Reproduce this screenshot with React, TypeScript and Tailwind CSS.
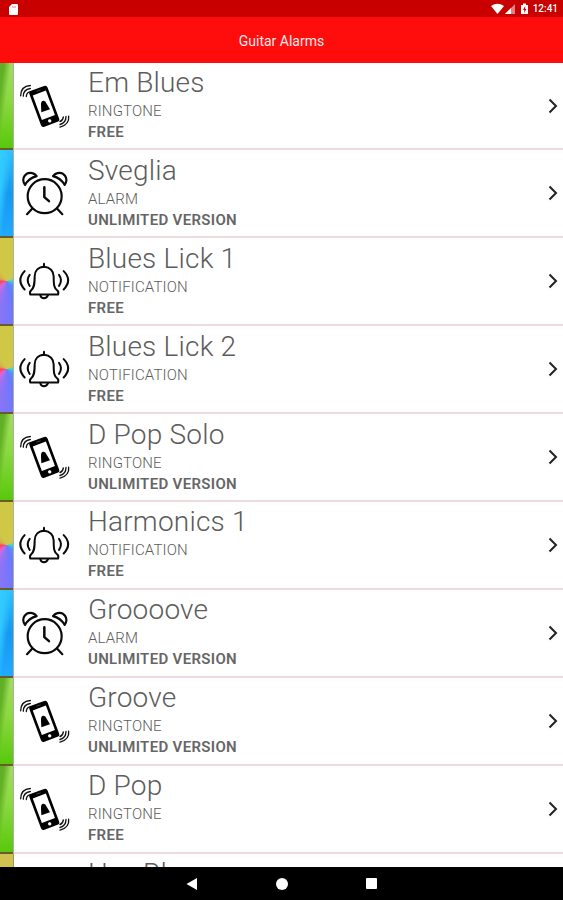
type AlarmKind = "RINGTONE" | "ALARM" | "NOTIFICATION";

interface Tone {
  title: string;
  kind: AlarmKind;
  tier: string;
}

const TONES: Tone[] = [
  { title: "Em Blues", kind: "RINGTONE", tier: "FREE" },
  { title: "Sveglia", kind: "ALARM", tier: "UNLIMITED VERSION" },
  { title: "Blues Lick 1", kind: "NOTIFICATION", tier: "FREE" },
  { title: "Blues Lick 2", kind: "NOTIFICATION", tier: "FREE" },
  { title: "D Pop Solo", kind: "RINGTONE", tier: "UNLIMITED VERSION" },
  { title: "Harmonics 1", kind: "NOTIFICATION", tier: "FREE" },
  { title: "Groooove", kind: "ALARM", tier: "UNLIMITED VERSION" },
  { title: "Groove", kind: "RINGTONE", tier: "UNLIMITED VERSION" },
  { title: "D Pop", kind: "RINGTONE", tier: "FREE" },
];

function PhoneIcon() {
  return (
    <g>
      <g transform="rotate(-20.5 133 138)">
        <rect x="104" y="80" width="58" height="115" rx="8" fill="#000" />
        <rect x="112" y="95" width="42" height="78" fill="#fff" />
        <path d="M127 87 H140" stroke="#555" strokeWidth="2" />
        <circle cx="133" cy="184" r="5" fill="#fff" />
      </g>
      <path d="M124 155 L123 135 Q122 123 129 121 Q136 119 140 130 L150 146 Z" fill="#000" />
      <g fill="none" stroke="#111" strokeWidth="4" strokeLinecap="round">
        <path d="M62 106 Q62 77 91 75" />
        <path d="M70 107 Q70 87 91 84" />
        <path d="M79 108 Q79 97 89 94" />
        <path d="M206 167 Q209 192 180 200" />
        <path d="M198 168 Q198 187 180 192" />
        <path d="M190 169 Q189 180 180 183" />
      </g>
    </g>
  );
}

function ClockIcon() {
  return (
    <g fill="none" stroke="#0a0a0a" strokeWidth="6.5" strokeLinecap="round" strokeLinejoin="round">
      <circle cx="134" cy="146" r="51" />
      <path d="M133 119 V149 L147 161" strokeWidth="7.5" />
      <path d="M97 183 L81 200 M171 183 L187 200" />
      <path d="M75 112 C61 91 79 72 97 77 Q105 79 110 86 Q87 92 75 112 Z" />
      <path d="M194 112 C208 91 190 72 172 77 Q164 79 159 86 Q182 92 194 112 Z" />
    </g>
  );
}

function BellIcon() {
  return (
    <g fill="none" stroke="#0a0a0a" strokeWidth="6" strokeLinecap="round" strokeLinejoin="round">
      <path d="M132 85 V93" />
      <path d="M132 94 C114 95 104 107 104 123 C104 148 102 158 93 165 Q88 170 91 177 H174 Q177 170 172 165 C162 158 161 148 161 123 C161 107 150 95 132 94 Z" />
      <path d="M121 179 Q123 188 132 188 Q141 188 144 179" />
      <path d="M89 118 Q77 134 89 151 M74 107 Q48 134 74 162" />
      <path d="M177 118 Q189 134 177 151 M191 107 Q218 134 191 162" />
    </g>
  );
}

const ICONS = {
  RINGTONE: PhoneIcon,
  ALARM: ClockIcon,
  NOTIFICATION: BellIcon,
};

const STRIPS = {
  RINGTONE:
    "bg-[linear-gradient(98deg,#5fae22_0%,#62b026_18%,transparent_45%),linear-gradient(180deg,#a0dc60_0%,#8bd83f_45%,#58c80c_100%)]",
  ALARM: "bg-[linear-gradient(98deg,#35ccff_0%,#30c6ff_25%,transparent_55%),linear-gradient(180deg,#2bc0ff_0%,#1698f0_50%,#20aaff_100%)]",
  NOTIFICATION:
    "bg-[conic-gradient(from_0deg_at_50%_50%,#cfc845_0deg,#cfc850_60deg,#45d8c0_90deg,#4a9cff_120deg,#6a78ff_165deg,#8f74f6_195deg,#d868d8_225deg,#ff4060_265deg,#d8a848_290deg,#cfc845_330deg,#cfc845_360deg)]",
};

function ToneRow({ tone }: { tone: Tone }) {
  const Icon = ICONS[tone.kind];
  return (
    <li className="flex h-[87.9px] shrink-0 text-[#5c5c5c]">
      <div className="flex w-[14px] shrink-0 flex-col border-r border-[#777]/60">
        <div className={`flex-1 ${STRIPS[tone.kind]}`} />
        <div className="h-[2px] bg-[#6b5a2a]" />
      </div>
      <div className="flex min-w-0 flex-1 border-b-2 border-[#eddadd]">
        <svg viewBox="42 7.5 210 258" className="h-[86px] w-[70px] shrink-0">
          <Icon />
        </svg>
        <div className="ml-[4px] flex-1 whitespace-nowrap pt-[3.5px]">
          <h2 className="text-[28px] font-light leading-[34px] tracking-[0.2px]">{tone.title}</h2>
          <p className="mt-[1px] text-[15px] font-light leading-[21px] tracking-[0.15px]">{tone.kind}</p>
          <p className="text-[15px] font-semibold leading-[21px] tracking-[0.33px] text-[#666]">{tone.tier}</p>
        </div>
        <svg viewBox="0 0 14 18" className="mr-[3px] mt-[34px] h-[18px] w-[14px]" fill="none">
          <path d="M3.5 2.5 L10 9 L3.5 15.5" stroke="#222" strokeWidth="2" />
        </svg>
      </div>
    </li>
  );
}

export default function App() {
  return (
    <div className="flex h-[900px] w-[563px] flex-col overflow-hidden bg-white font-['Roboto',sans-serif]">
      {/* Status bar */}
      <div className="flex h-[17px] shrink-0 items-center justify-between bg-[#c80000] pl-[9px] pr-[5px] pt-[1px] text-white">
        <svg viewBox="0 0 9 11" className="h-[11px] w-[9px]">
          <path d="M3 0 H8 Q9 0 9 1 V10 Q9 11 8 11 H1 Q0 11 0 10 V3 Z" fill="#fff" />
          <path d="M4 2 V4 M6 2 V4" stroke="#d66" strokeWidth="0.8" />
        </svg>
        <div className="flex items-center">
          <svg viewBox="0 0 38 12" className="h-[12px] w-[38px]">
            <path d="M0 3 Q6.5 -1.5 13 3 L6.5 11 Z" fill="#fff" />
            <path d="M24 1 V11 H14 Z" fill="#e58080" />
            <path d="M20 5 V11 H14 Z" fill="#fff" />
            <path d="M30 2 H32 V0.5 H35 V2 H37 V11 H30 Z" fill="#fff" />
            <path d="M34.2 3 L32 7 H33.3 V10 L35.3 6 H34.2 Z" fill="#c80000" />
          </svg>
          <span className="ml-[4px] text-[10px] font-medium leading-none">12:41</span>
        </div>
      </div>

      <header className="flex h-[45.5px] shrink-0 items-center justify-center bg-[#ff0c0c] pt-[3px]">
        <h1 className="text-[14px] leading-none text-[#ffe8e8]">Guitar Alarms</h1>
      </header>

      <ul className="flex min-h-0 flex-1 flex-col overflow-hidden">
        {TONES.map((tone) => (
          <ToneRow key={tone.title} tone={tone} />
        ))}
        {/* Next row, mostly scrolled out of view */}
        <li className="flex h-[14px] shrink-0 overflow-hidden border-b border-[#aaa] text-[#5c5c5c]">
          <div className="w-[14px] shrink-0 border-r border-[#777]/60 bg-[#cfc250]" />
          <h2 className="ml-[74px] pt-[3.5px] text-[28px] font-light leading-[34px] tracking-[0.2px]">Hey Bl</h2>
        </li>
      </ul>

      {/* Navigation bar */}
      <nav className="flex h-[33px] shrink-0 items-center justify-center gap-[78px] bg-black">
        <svg viewBox="0 0 12 12" className="h-3 w-3">
          <path d="M0.5 6 L11 0 V12 Z" fill="#fff" />
        </svg>
        <span className="h-3 w-3 rounded-full bg-white" />
        <span className="h-[11px] w-[11px] rounded-[1px] bg-white" />
      </nav>
    </div>
  );
}
